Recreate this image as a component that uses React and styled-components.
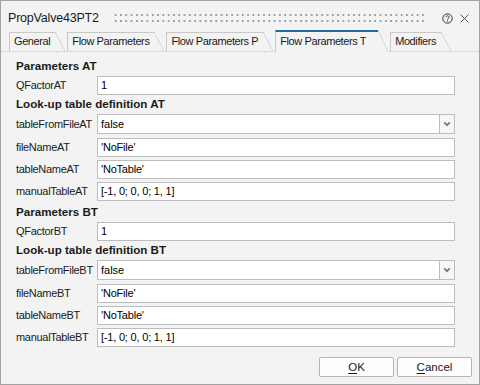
import React from "react";
import styled, { createGlobalStyle } from "styled-components";

const GlobalStyle = createGlobalStyle`
  html, body {
    margin: 0;
    padding: 0;
    background: #f3f3f3;
  }
  body {
    font-family: "Liberation Sans", Arial, sans-serif;
  }
`;

const tabs = [
  { label: "General" },
  { label: "Flow Parameters" },
  { label: "Flow Parameters P" },
  { label: "Flow Parameters T", active: true },
  { label: "Modifiers" },
];

const sections = [
  {
    title: "Parameters AT",
    rows: [{ label: "QFactorAT", value: "1" }],
  },
  {
    title: "Look-up table definition AT",
    rows: [
      { label: "tableFromFileAT", value: "false", select: true },
      { label: "fileNameAT", value: "'NoFile'" },
      { label: "tableNameAT", value: "'NoTable'" },
      { label: "manualTableAT", value: "[-1, 0; 0, 0; 1, 1]" },
    ],
  },
  {
    title: "Parameters BT",
    spaced: true,
    rows: [{ label: "QFactorBT", value: "1" }],
  },
  {
    title: "Look-up table definition BT",
    rows: [
      { label: "tableFromFileBT", value: "false", select: true },
      { label: "fileNameBT", value: "'NoFile'" },
      { label: "tableNameBT", value: "'NoTable'" },
      { label: "manualTableBT", value: "[-1, 0; 0, 0; 1, 1]" },
    ],
  },
];

const App = () => {
  return (
    <>
      <GlobalStyle />
      <Window>
        <TitleBar>
          <Title>PropValve43PT2</Title>
          <Grip />
          <TitleIcons>
            <svg width="11" height="11" viewBox="0 0 11 11">
              <circle cx="5.5" cy="5.5" r="4.7" fill="none" stroke="#333" strokeWidth="1" />
              <path
                d="M3.9 4.3 C3.9 3.3 4.6 2.8 5.5 2.8 C6.4 2.8 7.1 3.4 7.1 4.2 C7.1 5.1 5.6 5.3 5.6 6.4"
                fill="none"
                stroke="#333"
                strokeWidth="1"
              />
              <rect x="5" y="7.4" width="1.1" height="1.1" fill="#333" />
            </svg>
            <svg width="11" height="11" viewBox="0 0 11 11">
              <path d="M1.5 1.5 L9.5 9.5 M9.5 1.5 L1.5 9.5" stroke="#444" strokeWidth="0.9" />
            </svg>
          </TitleIcons>
        </TitleBar>

        <TabStrip>
          {tabs.map((t) => (
            <Tab key={t.label} $active={t.active}>
              {t.label}
            </Tab>
          ))}
        </TabStrip>

        <Panel>
          {sections.map((s) => (
            <React.Fragment key={s.title}>
              <SectionTitle $spaced={s.spaced}>{s.title}</SectionTitle>
              {s.rows.map((r) => (
                <Row key={r.label} $select={r.select}>
                  <FieldLabel>{r.label}</FieldLabel>
                  {r.select ? (
                    <SelectBox>
                      <SelectValue>{r.value}</SelectValue>
                      <DropButton>
                        <svg width="8" height="6" viewBox="0 0 8 6">
                          <path d="M1.2 1.4 L4 4.2 L6.8 1.4" fill="none" stroke="#7a7a7a" strokeWidth="1.8" />
                        </svg>
                      </DropButton>
                    </SelectBox>
                  ) : (
                    <TextBox>{r.value}</TextBox>
                  )}
                </Row>
              ))}
            </React.Fragment>
          ))}
        </Panel>

        <Footer>
          <Button>
            <u>O</u>K
          </Button>
          <Button>
            <u>C</u>ancel
          </Button>
        </Footer>
      </Window>
    </>
  );
};

const Window = styled.div`
  box-sizing: border-box;
  width: 480px;
  height: 385px;
  border: 1px solid #a3a3a3;
  background: #f3f3f3;
  display: flex;
  flex-direction: column;
  color: #1a1a1a;
`;

const TitleBar = styled.div`
  height: 30px;
  display: flex;
  align-items: center;
  padding: 4px 9px 0 7px;
  box-sizing: border-box;
`;

const Title = styled.div`
  font-size: 12.5px;
  letter-spacing: -0.2px;
  color: #1a1a1a;
  white-space: nowrap;
`;

const Grip = styled.div`
  flex: 1;
  height: 10px;
  margin: 0 16px 0 14px;
  background-image: radial-gradient(circle, #9c9c9c 0.9px, transparent 1.2px);
  background-size: 5.3px 6px;
  background-position: 0 -1px;
`;

const TitleIcons = styled.div`
  display: flex;
  align-items: center;
  gap: 6px;
`;

const TabStrip = styled.div`
  display: flex;
  align-items: flex-end;
  height: 21px;
  padding-left: 8px;
  border-bottom: 1px solid #dadada;
  box-sizing: border-box;
`;

const Tab = styled.div`
  position: relative;
  box-sizing: border-box;
  height: ${(p) => (p.$active ? "22px" : "19px")};
  margin-bottom: ${(p) => (p.$active ? "-1px" : "0")};
  padding: ${(p) => (p.$active ? "3px 12px 0 4px" : "2px 5px 0 4px")};
  margin-right: 12px;
  font-size: 11px;
  letter-spacing: -0.4px;
  white-space: nowrap;
  background: #f3f3f3;
  border-left: 1px solid #c8c8c8;
  border-top: ${(p) => (p.$active ? "2px solid #1f6f9e" : "1px solid #c8c8c8")};
  color: #1a1a1a;

  &::after {
    content: "";
    position: absolute;
    left: 100%;
    top: ${(p) => (p.$active ? "-2px" : "-1px")};
    bottom: 0;
    width: 10px;
    background: linear-gradient(
      to top right,
      #f3f3f3 calc(50% - 0.6px),
      #c8c8c8 50%,
      transparent calc(50% + 0.6px)
    );
  }
`;

const Panel = styled.div`
  flex: 1;
  padding: 6px 24px 0 15px;
  display: flex;
  flex-direction: column;
`;

const SectionTitle = styled.div`
  height: 16px;
  line-height: 16px;
  margin-top: ${(p) => (p.$spaced ? "2px" : "0")};
  font-weight: bold;
  font-size: 11.6px;
  color: #1a1a1a;
`;

const Row = styled.div`
  display: flex;
  align-items: center;
  height: ${(p) => (p.$select ? "24px" : "22px")};
`;

const FieldLabel = styled.div`
  width: 81px;
  flex-shrink: 0;
  font-size: 11px;
  letter-spacing: -0.3px;
  color: #1a1a1a;
  white-space: nowrap;
`;

const TextBox = styled.div`
  flex: 1;
  box-sizing: border-box;
  height: 19px;
  line-height: 17px;
  padding-left: 3px;
  background: #fff;
  border: 1px solid #bdbdbd;
  font-size: 11px;
  letter-spacing: -0.2px;
  color: #000;
`;

const SelectBox = styled.div`
  flex: 1;
  display: flex;
  height: 20px;
`;

const SelectValue = styled.div`
  flex: 1;
  box-sizing: border-box;
  line-height: 18px;
  padding-left: 3px;
  background: #fff;
  border: 1px solid #bdbdbd;
  font-size: 11px;
  color: #000;
`;

const DropButton = styled.div`
  width: 15px;
  box-sizing: border-box;
  border: 1px solid #bdbdbd;
  border-left: none;
  background: #f7f7f7;
  display: flex;
  align-items: center;
  justify-content: center;
`;

const Footer = styled.div`
  display: flex;
  justify-content: flex-end;
  gap: 3px;
  padding: 0 7px 7px 0;
`;

const Button = styled.div`
  box-sizing: border-box;
  width: 75px;
  height: 20px;
  line-height: 18px;
  text-align: center;
  background: #fdfdfd;
  border: 1px solid #b4b4b4;
  border-radius: 2px;
  font-size: 11.5px;
  color: #1a1a1a;

  u {
    text-decoration-thickness: 1px;
    text-underline-offset: 2px;
  }
`;

export default App;
